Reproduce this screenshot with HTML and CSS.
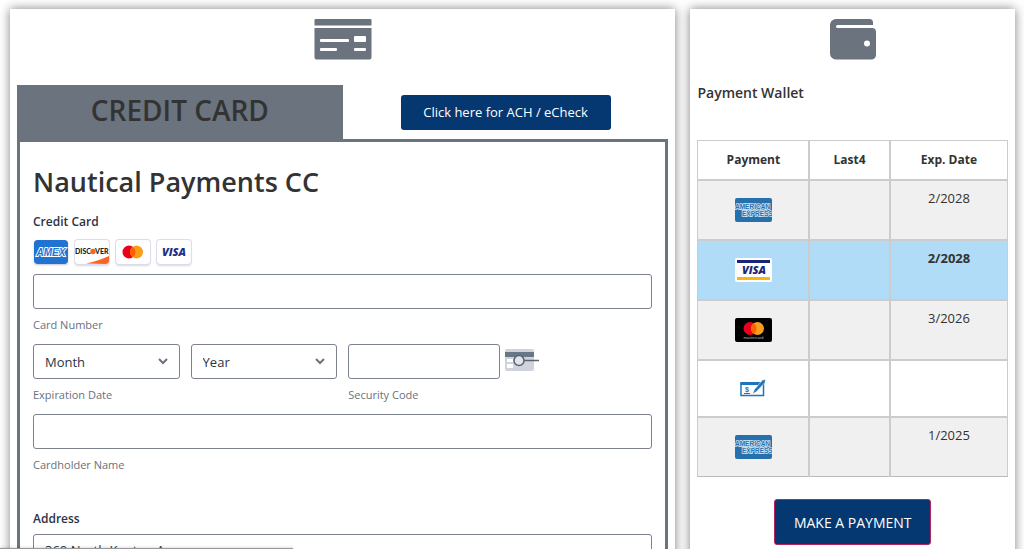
FILE: index.html
```
<!DOCTYPE html>
<html lang="en">

<head>
    <meta charset="UTF-8">
    <meta name="viewport" content="width=device-width, initial-scale=1.0">
    <title>Nautical Payments</title>
    <link rel="stylesheet" href="styles.css">
</head>

<body>
    <!-- shared card icons -->
    <svg class="defs" aria-hidden="true">
        <symbol id="amex-wallet" viewBox="0 0 37 24">
            <rect width="37" height="24" rx="2" fill="#2671ad" />
            <g font-family="Liberation Sans" font-weight="bold" font-size="6.500" fill="#2671ad" stroke="#d5e8f5" stroke-width="1.400" paint-order="stroke">
                <text x="0" y="11">AMERICAN</text>
                <text x="7" y="18">EXPRESS</text>
            </g>
        </symbol>
    </svg>

    <div class="page">
        <main class="panel">
            <svg class="panel-icon" width="58" height="41" viewBox="0 0 58 41" fill="#6a737e">
                <path d="M1.500 0h55a1 1 0 0 1 1 1v5.500H.5V1a1 1 0 0 1 1-1z" />
                <path fill-rule="evenodd" d="M.5 9h57v29.500a2 2 0 0 1-2 2h-53a2 2 0 0 1-2-2zM7 20a1 1 0 0 0-1 1v1a1 1 0 0 0 1 1h27a1 1 0 0 0 1-1v-1a1 1 0 0 0-1-1zM7 29a1 1 0 0 0-1 1v1a1 1 0 0 0 1 1h15a1 1 0 0 0 1-1v-1a1 1 0 0 0-1-1zM41 17a1 1 0 0 0-1 1v4a1 1 0 0 0 1 1h10a1 1 0 0 0 1-1v-4a1 1 0 0 0-1-1zM41 29a1 1 0 0 0-1 1v1a1 1 0 0 0 1 1h10a1 1 0 0 0 1-1v-1a1 1 0 0 0-1-1z" />
            </svg>

            <div class="tabs">
                <h2 class="tab">CREDIT CARD</h2>
                <button type="button" class="btn btn-ach">Click here for ACH / eCheck</button>
            </div>

            <form class="card-form">
                <h1>Nautical Payments CC</h1>

                <div class="label">Credit Card</div>
                <div class="cards">
                    <svg class="card" width="34" height="24" viewBox="0 0 34 24">
                        <rect width="34" height="24" rx="3" fill="#2173d2" />
                        <text x="17" y="16" text-anchor="middle" font-family="Liberation Sans" font-weight="bold" font-style="italic" font-size="10" fill="#2173d2" stroke="#fff" stroke-width="1.800" paint-order="stroke">AMEX</text>
                    </svg>
                    <svg class="card card-line" width="34" height="24" viewBox="0 0 34 24">
                        <path d="M11 23.500c9-2 16-4 23-7.500v5a3 3 0 0 1-3 3z" fill="#fb6420" />
                        <g font-family="Lato" font-weight="900" font-size="7" fill="#222">
                            <text x="0" y="14">DISC</text>
                            <text x="20" y="14">VER</text>
                        </g>
                        <circle cx="18" cy="11.500" r="2.700" fill="#fb6420" />
                    </svg>
                    <svg class="card card-line" width="34" height="24" viewBox="0 0 34 24">
                        <circle cx="13" cy="12" r="6.500" fill="#eb001b" />
                        <circle cx="20.500" cy="12" r="6.500" fill="#f79e1b" />
                        <path d="M16.750 6.700a6.500 6.500 0 0 1 0 10.600a6.500 6.500 0 0 1 0-10.600z" fill="#ff5f00" />
                    </svg>
                    <svg class="card card-line" width="34" height="24" viewBox="0 0 34 24">
                        <text x="17" y="16" text-anchor="middle" font-family="Open Sans" font-weight="800" font-style="italic" font-size="11" fill="#1c2f8c">VISA</text>
                    </svg>
                </div>

                <input type="text" id="card-number" class="field">
                <label class="caption" for="card-number">Card Number</label>

                <div class="row">
                    <div>
                        <div class="pair">
                            <select id="exp-month" class="field" aria-label="Expiration month">
                                <option>Month</option>
                            </select>
                            <select id="exp-year" class="field" aria-label="Expiration year">
                                <option>Year</option>
                            </select>
                        </div>
                        <label class="caption" for="exp-month">Expiration Date</label>
                    </div>
                    <div>
                        <div class="security">
                            <input type="text" id="security-code" class="field">
                            <svg width="34" height="28" viewBox="0 0 34 28">
                                <rect y="1" width="29" height="22" rx="2" fill="#d0d3dc" />
                                <rect y="4" width="29" height="5" fill="#667786" />
                                <rect x="2" y="11" width="6" height="3" fill="#fff" />
                                <rect x="2" y="16" width="6" height="4" fill="#fff" />
                                <rect x="9" y="11" width="10" height="3" fill="#fff" />
                                <circle cx="14" cy="12.500" r="5" fill="#e1e4ea" stroke="#5c6370" stroke-width="1.500" />
                                <path d="M19 12.500h15" stroke="#5c6370" stroke-width="1.500" />
                            </svg>
                        </div>
                        <label class="caption" for="security-code">Security Code</label>
                    </div>
                </div>

                <input type="text" id="cardholder" class="field">
                <label class="caption" for="cardholder">Cardholder Name</label>

                <label class="label label-address" for="address">Address</label>
                <input type="text" id="address" class="field" value="360 North Kenton A">
            </form>
        </main>

        <aside class="panel">
            <svg class="panel-icon" width="46" height="41" viewBox="0 0 46 41">
                <path d="M6 0h33.500A3.500 3.500 0 0 1 43 3.500V6H7.500a1.500 1.500 0 0 0 0 3H42a4 4 0 0 1 4 4v23a4.500 4.500 0 0 1-4.500 4.500H6A6 6 0 0 1 0 34.500V6a6 6 0 0 1 6-6z" fill="#6a737e" />
                <circle cx="37" cy="24.500" r="3" fill="#fff" />
            </svg>

            <h3>Payment Wallet</h3>

            <table>
                <thead>
                    <tr>
                        <th class="col-payment">Payment</th>
                        <th class="col-last4">Last4</th>
                        <th>Exp. Date</th>
                    </tr>
                </thead>
                <tbody>
                    <tr class="shaded">
                        <td><svg width="37" height="24"><use href="#amex-wallet" /></svg></td>
                        <td></td>
                        <td>2/2028</td>
                    </tr>
                    <tr class="selected">
                        <td>
                            <svg width="37" height="24" viewBox="0 0 37 24">
                                <rect width="37" height="24" rx="2" fill="#fff" />
                                <rect x="2" y="2" width="33" height="3" fill="#1b247b" />
                                <rect x="2" y="19" width="33" height="3" fill="#fbb40b" />
                                <text x="19" y="16" text-anchor="middle" font-family="Open Sans" font-weight="800" font-style="italic" font-size="11" fill="#1b247b">VISA</text>
                            </svg>
                        </td>
                        <td></td>
                        <td>2/2028</td>
                    </tr>
                    <tr class="shaded">
                        <td>
                            <svg width="37" height="24" viewBox="0 0 37 24">
                                <rect width="37" height="24" rx="2" fill="#000" />
                                <circle cx="15" cy="10.500" r="6.500" fill="#eb001b" />
                                <circle cx="22.500" cy="10.500" r="6.500" fill="#f79e1b" />
                                <path d="M18.750 5.200a6.500 6.500 0 0 1 0 10.600a6.500 6.500 0 0 1 0-10.600z" fill="#ff5f00" />
                                <text x="18.500" y="20.500" text-anchor="middle" font-family="Liberation Sans" font-size="4" fill="#bbb">mastercard</text>
                            </svg>
                        </td>
                        <td></td>
                        <td>3/2026</td>
                    </tr>
                    <tr class="check">
                        <td>
                            <svg width="26" height="18" viewBox="0 0 26 18">
                                <path d="M1 4h22.500v12.500H1z" fill="#fff" stroke="#1f74bb" stroke-width="1.500" />
                                <path d="M.5 3H24v3H.5z" fill="#1f74bb" />
                                <text x="7" y="13" text-anchor="middle" font-family="Liberation Sans" font-weight="bold" font-size="7" fill="#1f74bb">$</text>
                                <path d="M4 14.500h6" stroke="#1f74bb" />
                                <path d="M12.500 15l2-4.500L22.500 1l3-.5-.5 3-8.500 9z" fill="#1f74bb" stroke="#fff" stroke-width=".5" />
                            </svg>
                        </td>
                        <td></td>
                        <td></td>
                    </tr>
                    <tr class="shaded">
                        <td><svg width="37" height="24"><use href="#amex-wallet" /></svg></td>
                        <td></td>
                        <td>1/2025</td>
                    </tr>
                </tbody>
            </table>

            <button type="button" class="btn btn-pay">MAKE A PAYMENT</button>
        </aside>
    </div>

    <div class="status-bar"></div>
</body>

</html>
```
FILE: styles.css
```
* {
    box-sizing: border-box;
}

html {
    scrollbar-width: none;
}

body {
    margin: 0;
    background: #fff;
    color: #333;
    font-family: "Segoe UI", "Open Sans", "Noto Sans", sans-serif;
    font-size: 13px;
}

.defs {
    display: none;
}

.page {
    display: grid;
    grid-template-columns: 2.05fr 1fr;
    gap: 15px;
    padding: 9px 9px 0 10px;
}

.panel {
    min-height: 100vh;
    padding: 10px 7px 20px;
    background: #fff;
    box-shadow: 0 0 10px rgba(0, 0, 0, 0.5);
}

.panel-icon {
    display: block;
    margin: 0 auto;
}

/* tabs */
.tabs {
    display: grid;
    grid-template-columns: 1fr 1fr;
    align-items: center;
    margin-top: 25px;
}

.tab {
    margin: 0;
    height: 54px;
    background: #6a737e;
    font-size: 28px;
    font-weight: 600;
    line-height: 50px;
    text-align: center;
}

.btn {
    display: block;
    margin: 0 auto;
    border: 0;
    border-radius: 3px;
    background: #053770;
    color: #fff;
    font-family: inherit;
    font-size: 14px;
}

.btn-ach {
    width: 210px;
    height: 35px;
    padding: 0;
    font-size: 13px;
}

/* form */
.card-form {
    padding: 20px 13px;
    border: 3px solid #6a737e;
}

h1 {
    margin: 0 0 12px;
    font-size: 27px;
    font-weight: 600;
    line-height: 40px;
}

.label {
    display: block;
    color: #2c3345;
    font-size: 12px;
    font-weight: 600;
    line-height: 16px;
}

.label-address {
    margin: 38px 0 7px;
}

.cards {
    display: flex;
    gap: 7px;
    margin: 10px 0;
    padding-left: 1px;
}

.card {
    border-radius: 3px;
    box-shadow: 0 1px 2px rgba(60, 60, 120, 0.3);
}

.card-line {
    box-shadow: 0 0 0 1px #dcdcec, 0 2px 2px rgba(60, 60, 120, 0.2);
}

.field {
    display: block;
    width: 100%;
    height: 35px;
    padding: 0 11px 4px;
    border: 1px solid #7b828e;
    border-radius: 3px;
    background: #fff;
    color: #2c3345;
    font-family: inherit;
    font-size: 13px;
}

select.field {
    padding-bottom: 0;
    appearance: none;
    background: #fff url("data:image/svg+xml,%3Csvg xmlns='http://www.w3.org/2000/svg' width='10' height='7'%3E%3Cpath d='M1 1l4 4 4-4' fill='none' stroke='%236a737e' stroke-width='2'/%3E%3C/svg%3E") no-repeat right 11px center;
}

.caption {
    display: block;
    margin: 8px 0 11px;
    color: #6a717d;
    font-size: 11px;
    line-height: 16px;
}

.row,
.pair {
    display: grid;
    grid-template-columns: 1fr 1fr;
    gap: 11px;
}

.security {
    display: flex;
    align-items: center;
    gap: 5px;
}

.security .field {
    width: 50%;
}

/* wallet */
h3 {
    margin: 23px 0 37px;
    font-size: 14px;
    font-weight: 600;
    line-height: 20px;
}

table {
    width: 100%;
    border: 1px solid #ccc;
    border-collapse: collapse;
    table-layout: fixed;
    text-align: center;
}

.col-payment {
    width: 36%;
}

.col-last4 {
    width: 26%;
}

th,
td {
    padding: 0;
    border-bottom: 2px solid #ccc;
    border-left: 2px solid #ccc;
}

th:first-child,
td:first-child {
    border-left: 1px solid #ccc;
}

tr:last-child td {
    border-bottom: 1px solid #bbb;
}

th {
    height: 39px;
    font-size: 12px;
    font-weight: 700;
}

td {
    height: 60px;
    padding-top: 7px;
    line-height: 20px;
    vertical-align: top;
}

td:first-child {
    padding-top: 0;
    vertical-align: middle;
}

td svg {
    display: block;
    margin: 0 auto;
}

.check td {
    height: 57px;
}

.shaded {
    background: #f0f0f0;
}

.selected {
    background: #b0dcf7;
    font-weight: 700;
}

.btn-pay {
    width: 157px;
    height: 46px;
    margin-top: 22px;
    padding: 0;
    border: 1px solid #b3265f;
}

/* edge of the link status bar over the page bottom */
.status-bar {
    position: fixed;
    bottom: 0;
    left: 0;
    width: 293px;
    height: 1px;
    background: #999;
    box-shadow: 0 0 3px rgba(0, 0, 0, 0.4);
}
```
